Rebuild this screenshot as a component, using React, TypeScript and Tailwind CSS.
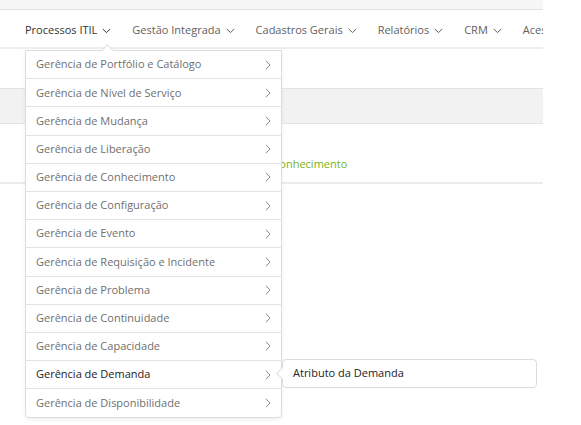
const navItems = ['Processos ITIL', 'Gestão Integrada', 'Cadastros Gerais', 'Relatórios', 'CRM', 'Acessos']

const menuItems = [
  'Gerência de Portfólio e Catálogo',
  'Gerência de Nível de Serviço',
  'Gerência de Mudança',
  'Gerência de Liberação',
  'Gerência de Conhecimento',
  'Gerência de Configuração',
  'Gerência de Evento',
  'Gerência de Requisição e Incidente',
  'Gerência de Problema',
  'Gerência de Continuidade',
  'Gerência de Capacidade',
  'Gerência de Demanda',
  'Gerência de Disponibilidade',
]

function ChevronDown() {
  return (
    <svg width="9" height="6" viewBox="0 0 9 6" className="ml-[5px] mt-[2px] shrink-0" aria-hidden="true">
      <path d="M0.8 1 L4.5 4.6 L8.2 1" fill="none" stroke="currentColor" strokeWidth="1" />
    </svg>
  )
}

function ChevronRight() {
  return (
    <svg width="6" height="10" viewBox="0 0 6 10" className="shrink-0 text-[#888]" aria-hidden="true">
      <path d="M1 0.8 L5 5 L1 9.2" fill="none" stroke="currentColor" strokeWidth="1" />
    </svg>
  )
}

export default function App() {
  return (
    <div className="min-h-[425px] w-[581px] bg-white font-['Open_Sans',sans-serif] text-[11px]">
      <div className="relative w-[543px] overflow-hidden">
        <div className="h-[10px] border-b border-[#e3e3e3] bg-[#f7f7f7]" />
        <nav className="flex h-[39px] items-center gap-[21px] whitespace-nowrap border-b-2 border-[#ececec] pl-[25px] pt-[3px] text-[#5f5f5f]">
          {navItems.map((item, i) => (
            <div key={item} className={`flex items-center ${i === 0 ? 'text-[#333]' : ''}`}>
              <span>{item}</span>
              <ChevronDown />
            </div>
          ))}
        </nav>

        {/* page content behind the dropdown */}
        <div className="h-[39px]" />
        <div className="h-[36px] border-y border-[#e3e3e3] bg-[#f2f2f2]" />
        <div className="flex h-[60px] items-end border-b-2 border-[#ececec] pb-[10px] pl-[208px] text-[#7ab317]">
          Gerência de Conhecimento
        </div>
        <div className="h-[240px]" />

        {/* dropdown */}
        <div className="absolute left-[25px] top-[50px] w-[257px] rounded-b-[4px] border border-[#dcdcdc] bg-white shadow-[0_2px_4px_rgba(0,0,0,0.06)]">
          <div className="absolute -top-[5px] left-[77px] h-[9px] w-[9px] rotate-45 border-l border-t border-[#dcdcdc] bg-white" />
          {menuItems.map((item, i) => (
            <div
              key={item}
              className={`relative flex h-[28.2px] items-center justify-between pl-[10px] pr-[10px] ${
                i < menuItems.length - 1 ? 'border-b border-[#e3e3e3]' : ''
              } ${item === 'Gerência de Demanda' ? 'text-[#222]' : 'text-[#6f6f6f]'}`}
            >
              <span>{item}</span>
              <ChevronRight />
            </div>
          ))}
        </div>

        {/* submenu */}
        <div className="absolute left-[282px] top-[359px] flex h-[29px] w-[255px] items-center rounded-[4px] border border-[#dcdcdc] bg-white pl-[10px] text-[#222]">
          <div className="absolute -left-[5px] top-[9px] h-[9px] w-[9px] rotate-45 border-b border-l border-[#dcdcdc] bg-white" />
          <span className="relative">Atributo da Demanda</span>
        </div>
      </div>
    </div>
  )
}
